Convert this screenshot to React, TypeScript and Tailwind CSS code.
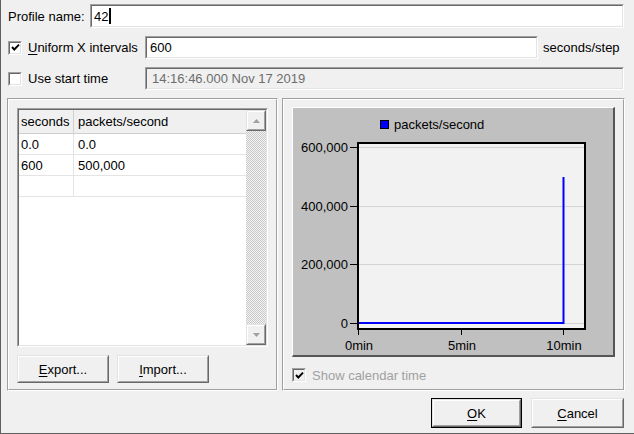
import type { ReactNode } from "react";

const sunkenOuter = "border border-t-[#a0a0a0] border-l-[#a0a0a0] border-b-white border-r-white";
const sunkenInner = "border border-t-[#696969] border-l-[#696969] border-b-[#e3e3e3] border-r-[#e3e3e3]";
const raisedOuter = "border border-t-[#e3e3e3] border-l-[#e3e3e3] border-b-[#696969] border-r-[#696969]";
const raisedInner = "border border-t-white border-l-white border-b-[#a0a0a0] border-r-[#a0a0a0]";
const grooveOuter = "border border-t-[#a0a0a0] border-l-[#a0a0a0] border-b-white border-r-white";
const grooveInner = "border border-t-white border-l-white border-b-[#a0a0a0] border-r-[#a0a0a0]";

function Check({ checked, disabled }: { checked?: boolean; disabled?: boolean }) {
  return (
    <span className={`block h-[14px] w-[14px] shrink-0 ${sunkenOuter}`}>
      <span className={`flex h-full w-full items-center justify-center ${sunkenInner} ${disabled ? "bg-[#f0f0f0]" : "bg-white"}`}>
        {checked && (
          <svg width="9" height="9" viewBox="0 0 9 9">
            <polyline points="1,4 3.3,6.5 8,1.6" fill="none" stroke="#000" strokeWidth="1.9" />
          </svg>
        )}
      </span>
    </span>
  );
}

function Field({ width, children, disabled }: { width: string; children: ReactNode; disabled?: boolean }) {
  return (
    <div className={`h-full ${width} ${sunkenOuter}`}>
      <div className={`flex h-full items-center pl-[2px] ${sunkenInner} ${disabled ? "bg-[#f0f0f0] text-[#6d6d6d]" : "bg-white"}`}>
        {children}
      </div>
    </div>
  );
}

function Button({ width, height, children, isDefault }: { width: string; height: string; children: ReactNode; isDefault?: boolean }) {
  const body = (
    <div className={`h-full w-full ${raisedOuter}`}>
      <div className={`flex h-full w-full items-center justify-center bg-[#f0f0f0] ${raisedInner}`}>{children}</div>
    </div>
  );
  return (
    <div className={`${width} ${height} ${isDefault ? "border border-black" : ""}`}>{body}</div>
  );
}

function Arrow({ up }: { up?: boolean }) {
  return (
    <svg width="7" height="4" viewBox="0 0 7 4">
      <polygon points={up ? "0,4 7,4 3.5,0" : "0,0 7,0 3.5,4"} fill="#a0a0a0" />
    </svg>
  );
}

function ScrollButton({ up }: { up?: boolean }) {
  return (
    <div className={`h-[21px] w-full ${raisedOuter}`}>
      <div className={`flex h-full w-full items-center justify-center bg-[#f0f0f0] ${raisedInner}`}>
        <Arrow up={up} />
      </div>
    </div>
  );
}

const rows = [
  ["0.0", "0.0"],
  ["600", "500,000"],
  ["", ""],
];

function Table() {
  return (
    <div className={`h-[239px] w-[251px] ${sunkenOuter}`}>
      <div className={`flex h-full w-full ${sunkenInner}`}>
        <div className="flex-1 bg-white">
          <div className="flex h-[24px] border-b border-[#d0d0d0] bg-[#f0f0f0]">
            <div className="flex w-[55px] items-center border-r border-[#d0d0d0] pl-[2px]">seconds</div>
            <div className="flex flex-1 items-center pl-[4px]">packets/second</div>
          </div>
          {rows.map((r, i) => (
            <div key={i} className="flex h-[21px] border-b border-[#e4e4e4]">
              <div className="flex w-[55px] items-center border-r border-[#e4e4e4] pl-[2px]">{r[0]}</div>
              <div className="flex flex-1 items-center pl-[4px]">{r[1]}</div>
            </div>
          ))}
        </div>
        <div className="flex w-[20px] flex-col">
          <ScrollButton up />
          <div className="flex-1 bg-[repeating-conic-gradient(#c8c8c8_0_25%,#f4f4f4_0_50%)] bg-[length:2px_2px]" />
          <ScrollButton />
        </div>
      </div>
    </div>
  );
}

function Chart() {
  const ys = [
    { y: 39, label: "600,000" },
    { y: 98, label: "400,000" },
    { y: 156, label: "200,000" },
    { y: 215, label: "0" },
  ];
  const xs = [
    { x: 65, label: "0min" },
    { x: 168, label: "5min" },
    { x: 270, label: "10min" },
  ];
  return (
    <div className="h-[250px] w-[323px] border-t border-l border-t-white border-l-white border-r-2 border-b-2 border-r-[#555] border-b-[#555] bg-[#c0c0c0]">
      <svg width="320" height="247" viewBox="0 0 320 247" fontSize="13" className="block">
        <rect x="87.5" y="12.5" width="8" height="8" fill="#0000ff" stroke="#000" />
        <text x="101" y="21" fill="#000">packets/second</text>
        <rect x="65" y="35" width="227" height="186" fill="#f2f2f2" />
        {ys.map((t) => (
          <g key={t.label}>
            <line x1="66" x2="291" y1={t.y + 0.5} y2={t.y + 0.5} stroke="#d4d4d4" />
            <line x1="57" x2="65" y1={t.y + 0.5} y2={t.y + 0.5} stroke="#000" />
            <text x="55" y={t.y + 5} textAnchor="end" fill="#000">{t.label}</text>
          </g>
        ))}
        {xs.map((t) => (
          <g key={t.label}>
            <line x1={t.x + 0.5} x2={t.x + 0.5} y1="221" y2="227" stroke="#000" />
            <text x={t.x + 1} y="242" textAnchor="middle" fill="#000">{t.label}</text>
          </g>
        ))}
        <polyline points="65,215 270.5,215 270.5,69" fill="none" stroke="#0000ff" strokeWidth="2" />
        <rect x="65" y="35" width="227" height="186" fill="none" stroke="#000" strokeWidth="2" />
      </svg>
    </div>
  );
}

export default function App() {
  return (
    <div className="flex h-[434px] w-[634px] flex-col border-b border-l border-[#5f5f5f] bg-[#f0f0f0] font-['Liberation_Sans',Arial,sans-serif] text-[13px] leading-none text-black">
      {/* Champs du haut */}
      <div className="flex flex-col gap-[8px] pl-[7px] pt-[4px]">
        <div className="flex h-[24px] items-center">
          <div className="w-[82px]">Profile name:</div>
          <Field width="w-[534px]">
            <span>42</span>
            <span className="ml-[1px] h-[16px] w-[2px] bg-black" />
          </Field>
        </div>
        <div className="flex h-[23px] items-center">
          <div className="flex w-[137px] items-center">
            <Check checked />
            <span className="ml-[6px]">
              <span className="underline underline-offset-2">U</span>niform X intervals
            </span>
          </div>
          <Field width="w-[393px]">
            <span className="pl-[1px]">600</span>
          </Field>
          <span className="ml-[5px]">seconds/step</span>
        </div>
        <div className="flex h-[23px] items-center">
          <div className="flex w-[137px] items-center">
            <Check />
            <span className="ml-[6px]">Use start time</span>
          </div>
          <Field width="w-[479px]" disabled>
            <span className="pl-[3px]">14:16:46.000 Nov 17 2019</span>
          </Field>
        </div>
      </div>

      {/* Panneaux */}
      <div className="mt-[8px] flex gap-[4px] pl-[6px]">
        <div className={`h-[293px] w-[271px] ${grooveOuter}`}>
          <div className={`h-full w-full pl-[8px] pt-[8px] ${grooveInner}`}>
            <Table />
            <div className="mt-[8px] flex gap-[8px]">
              <Button width="w-[92px]" height="h-[28px]">
                <span><span className="underline underline-offset-2">E</span>xport...</span>
              </Button>
              <Button width="w-[92px]" height="h-[28px]">
                <span><span className="underline underline-offset-2">I</span>mport...</span>
              </Button>
            </div>
          </div>
        </div>
        <div className={`h-[293px] w-[343px] ${grooveOuter}`}>
          <div className={`h-full w-full pl-[8px] pt-[7px] ${grooveInner}`}>
            <Chart />
            <div className="mt-[11px] flex items-center">
              <Check checked disabled />
              <span className="ml-[6px] text-[#a0a0a0]">Show calendar time</span>
            </div>
          </div>
        </div>
      </div>

      {/* Boutons */}
      <div className="mt-[7px] flex justify-end gap-[9px] pr-[10px]">
        <Button width="w-[91px]" height="h-[30px]" isDefault>
          <span><span className="underline underline-offset-2">O</span>K</span>
        </Button>
        <Button width="w-[93px]" height="h-[30px]">
          <span><span className="underline underline-offset-2">C</span>ancel</span>
        </Button>
      </div>
    </div>
  );
}
